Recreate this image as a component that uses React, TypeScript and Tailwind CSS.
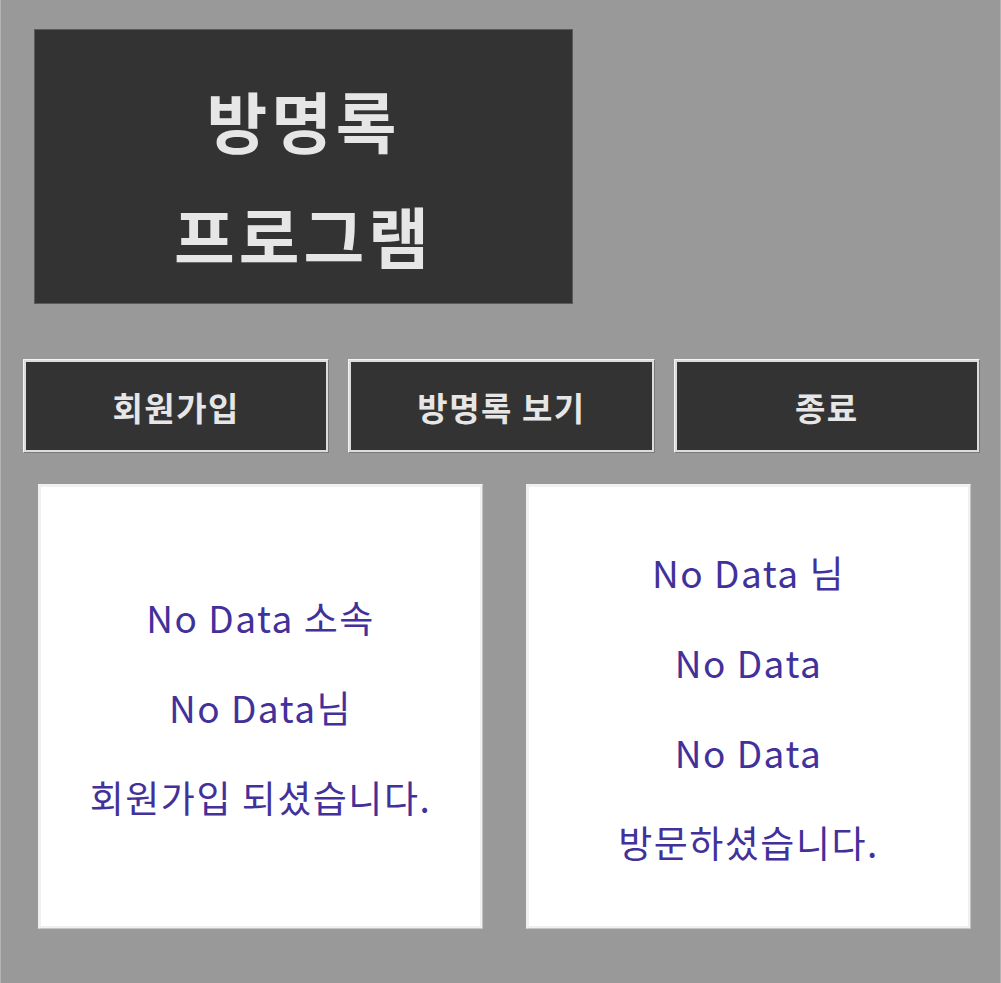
import React from "react";

const kr = { fontFamily: '"Noto Sans CJK KR", "Noto Sans", sans-serif' };

function MenuButton({ label }: { label: string }) {
  return (
    <button
      className="h-[94px] border border-t-[#f4f4f4] border-l-[#f4f4f4] border-b-[#7a7a7a] border-r-[#7a7a7a] p-0"
      style={kr}
    >
      <div className="flex h-full w-full items-center justify-center border-2 border-[#dcdcdc] bg-[#333333] pt-[4px] text-[33px] font-bold tracking-[1.5px] text-[#e6e6e6]">
        {label}
      </div>
    </button>
  );
}

function InfoPanel({ lines }: { lines: string[] }) {
  return (
    <div className="h-[445px] w-[445px] border border-t-[#f0f0f0] border-l-[#f0f0f0] border-b-[#c4c4c4] border-r-[#c4c4c4]">
      <div
        className="flex h-full w-full flex-col items-center justify-center border-2 border-[#f0f0f0] bg-white text-[37px] font-normal leading-[90px] tracking-[1.5px] text-[#42319a]"
        style={kr}
      >
        {lines.map((line, i) => (
          <div key={i} className="whitespace-pre">
            {line}
          </div>
        ))}
      </div>
    </div>
  );
}

export default function App() {
  return (
    <div className="h-[983px] w-[1001px] overflow-hidden border-x border-[#b4b4b4] bg-[#999999] pt-[29px]">
      {/* 타이틀 */}
      <div
        className="ml-[33px] flex h-[275px] w-[539px] flex-col items-center justify-center border border-[#5a5a5a] bg-[#333333] pt-[20px] text-[66px] font-bold leading-[115px] tracking-[4px] text-[#e6e6e6]"
        style={kr}
      >
        <div>방명록</div>
        <div>프로그램</div>
      </div>

      {/* 메뉴 버튼 */}
      <div className="ml-[22px] mt-[55px] grid w-[957px] grid-cols-3 gap-[19px]">
        <MenuButton label="회원가입" />
        <MenuButton label="방명록 보기" />
        <MenuButton label="종료" />
      </div>

      {/* 결과 패널 */}
      <div className="ml-[37px] mt-[31px] flex gap-[43px]">
        <InfoPanel lines={["No Data 소속", "No Data님", "회원가입 되셨습니다."]} />
        <InfoPanel lines={["No Data 님", "No Data", "No Data", "방문하셨습니다."]} />
      </div>
    </div>
  );
}
